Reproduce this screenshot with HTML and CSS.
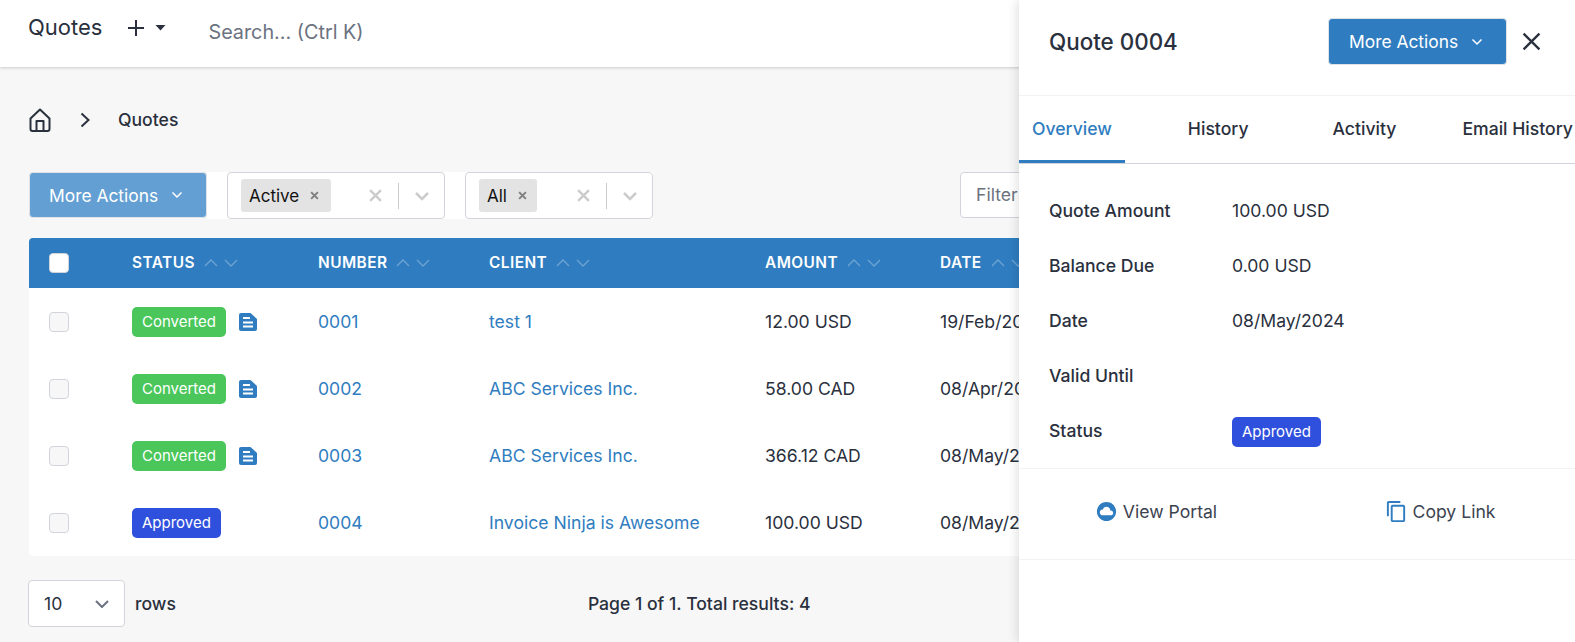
FILE: index.html
```html
<!DOCTYPE html>
<html lang="en">
<head>
<meta charset="utf-8">
<title>Quotes</title>
<link rel="stylesheet" href="styles.css">
</head>
<body>
<header class="topbar">
  <h1 class="page-title">Quotes</h1>
  <svg class="plus" viewBox="0 0 16 16"><path d="M8 0v16M0 8h16"/></svg>
  <svg class="caret" viewBox="0 0 10 6"><path d="M0 0h10L5 5.500z"/></svg>
  <span class="search">Search... (Ctrl K)</span>
</header>
<main class="main">
  <nav class="crumbs">
    <svg class="home" viewBox="0 0 22 24"><path d="M1.500 10.500 11 1.500l9.500 9v10.500a2 2 0 0 1-2 2h-15a2 2 0 0 1-2-2z"/><path d="M7.500 23v-10h7v10"/></svg>
    <svg class="crumb-chev" viewBox="0 0 10 16"><path d="m1.500 1.500 7 6.500-7 6.500"/></svg>
    <span class="crumb-text">Quotes</span>
  </nav>
  <div class="toolbar">
    <button class="btn btn-faded">More Actions<svg class="chev-sm" viewBox="0 0 12 8"><path d="m1.500 1.500 4.500 4.500 4.500-4.500"/></svg></button>
    <div class="filters">
      <div class="select select-status">
        <span class="tag">Active<svg class="tag-x" viewBox="0 0 8 8"><path d="m1 1 6 6M7 1 1 7"/></svg></span>
        <svg class="clear" viewBox="0 0 12 12"><path d="m1 1 10 10M11 1 1 11"/></svg><span class="divider"></span>
        <svg class="sel-chev" viewBox="0 0 16 10"><path d="m2 2 6 6 6-6"/></svg>
      </div>
      <div class="select select-range">
        <span class="tag">All<svg class="tag-x" viewBox="0 0 8 8"><path d="m1 1 6 6M7 1 1 7"/></svg></span>
        <svg class="clear" viewBox="0 0 12 12"><path d="m1 1 10 10M11 1 1 11"/></svg><span class="divider"></span>
        <svg class="sel-chev" viewBox="0 0 16 10"><path d="m2 2 6 6 6-6"/></svg>
      </div>
    </div>
    <div class="filter-input">Filter</div>
  </div>
  <table class="table">
    <colgroup><col class="c-check"><col class="c-status"><col class="c-number"><col class="c-client"><col class="c-amount"><col></colgroup>
    <thead>
      <tr>
        <th><span class="check check-head"></span></th>
        <th>STATUS<span class="sort"><svg viewBox="0 0 14 8"><path d="m1 7 6-6 6 6"/></svg><svg viewBox="0 0 14 8"><path d="m1 1 6 6 6-6"/></svg></span></th>
        <th>NUMBER<span class="sort"><svg viewBox="0 0 14 8"><path d="m1 7 6-6 6 6"/></svg><svg viewBox="0 0 14 8"><path d="m1 1 6 6 6-6"/></svg></span></th>
        <th>CLIENT<span class="sort"><svg viewBox="0 0 14 8"><path d="m1 7 6-6 6 6"/></svg><svg viewBox="0 0 14 8"><path d="m1 1 6 6 6-6"/></svg></span></th>
        <th>AMOUNT<span class="sort"><svg viewBox="0 0 14 8"><path d="m1 7 6-6 6 6"/></svg><svg viewBox="0 0 14 8"><path d="m1 1 6 6 6-6"/></svg></span></th>
        <th>DATE<span class="sort"><svg viewBox="0 0 14 8"><path d="m1 7 6-6 6 6"/></svg><svg viewBox="0 0 14 8"><path d="m1 1 6 6 6-6"/></svg></span></th>
      </tr>
    </thead>
    <tbody>
      <tr>
        <td><span class="check"></span></td>
        <td><div class="status-cell"><span class="badge badge-green">Converted</span><svg class="doc" viewBox="0 0 18 18"><path class="doc-bg" d="M2 0h9.500L18 6v10a2 2 0 0 1-2 2H2a2 2 0 0 1-2-2V2a2 2 0 0 1 2-2z"/><path class="doc-line" d="M4 5h7M4 9.500h10M4 13.500h10"/></svg></div></td>
        <td><a class="link">0001</a></td><td><a class="link">test 1</a></td><td>12.00 USD</td><td>19/Feb/2024</td>
      </tr>
      <tr>
        <td><span class="check"></span></td>
        <td><div class="status-cell"><span class="badge badge-green">Converted</span><svg class="doc" viewBox="0 0 18 18"><path class="doc-bg" d="M2 0h9.500L18 6v10a2 2 0 0 1-2 2H2a2 2 0 0 1-2-2V2a2 2 0 0 1 2-2z"/><path class="doc-line" d="M4 5h7M4 9.500h10M4 13.500h10"/></svg></div></td>
        <td><a class="link">0002</a></td><td><a class="link">ABC Services Inc.</a></td><td>58.00 CAD</td><td>08/Apr/2024</td>
      </tr>
      <tr>
        <td><span class="check"></span></td>
        <td><div class="status-cell"><span class="badge badge-green">Converted</span><svg class="doc" viewBox="0 0 18 18"><path class="doc-bg" d="M2 0h9.500L18 6v10a2 2 0 0 1-2 2H2a2 2 0 0 1-2-2V2a2 2 0 0 1 2-2z"/><path class="doc-line" d="M4 5h7M4 9.500h10M4 13.500h10"/></svg></div></td>
        <td><a class="link">0003</a></td><td><a class="link">ABC Services Inc.</a></td><td>366.12 CAD</td><td>08/May/2024</td>
      </tr>
      <tr>
        <td><span class="check"></span></td>
        <td><div class="status-cell"><span class="badge badge-blue">Approved</span></div></td>
        <td><a class="link">0004</a></td><td><a class="link">Invoice Ninja is Awesome</a></td><td>100.00 USD</td><td>08/May/2024</td>
      </tr>
    </tbody>
  </table>
  <div class="pager">
    <div class="rows-select">10<svg class="rows-chev" viewBox="0 0 14 8"><path d="m1 1 6 6 6-6"/></svg></div>
    <span class="rows-label">rows</span>
    <span class="page-info">Page 1 of 1. Total results: 4</span>
  </div>
</main>
<aside class="panel">
  <div class="panel-head">
    <h2 class="panel-title">Quote 0004</h2>
    <button class="btn btn-solid">More Actions<svg class="chev-sm" viewBox="0 0 12 8"><path d="m1.500 1.500 4.500 4.500 4.500-4.500"/></svg></button>
    <svg class="close" viewBox="0 0 18 18"><path d="m1.500 1.500 15 15M16.500 1.500l-15 15"/></svg>
  </div>
  <div class="tabs">
    <span class="tab tab-active">Overview</span>
    <span class="tab">History</span>
    <span class="tab">Activity</span>
    <span class="tab">Email History</span>
  </div>
  <dl class="details">
    <div class="detail"><dt>Quote Amount</dt><dd>100.00 USD</dd></div>
    <div class="detail"><dt>Balance Due</dt><dd>0.00 USD</dd></div>
    <div class="detail"><dt>Date</dt><dd>08/May/2024</dd></div>
    <div class="detail"><dt>Valid Until</dt><dd></dd></div>
    <div class="detail"><dt>Status</dt><dd class="detail-badge"><span class="badge badge-blue">Approved</span></dd></div>
  </dl>
  <div class="actions">
    <div class="action"><svg class="action-icon" viewBox="0 0 24 24"><path d="M12 2C6.470 2 2 6.470 2 12s4.470 10 10 10 10-4.470 10-10S17.530 2 12 2zm4.500 14H8c-1.660 0-3-1.340-3-3s1.340-3 3-3l.14.01C8.580 8.280 10.130 7 12 7c2.210 0 4 1.790 4 4h.5c1.380 0 2.500 1.120 2.500 2.500S17.880 16 16.500 16z"/></svg>View Portal</div>
    <div class="action"><svg class="action-icon" viewBox="0 0 24 24"><path d="M16 1H4c-1.100 0-2 .9-2 2v14h2V3h12V1zm3 4H8c-1.100 0-2 .9-2 2v14c0 1.100.9 2 2 2h11c1.100 0 2-.9 2-2V7c0-1.100-.9-2-2-2zm0 16H8V7h11v14z"/></svg>Copy Link</div>
  </div>
</aside>
</body>
</html>
```
FILE: styles.css
```css
* { box-sizing: border-box; }
html, body { margin: 0; height: 642px; overflow: hidden; }
body { background: #f7f7f7; font-family: Inter, "Liberation Sans", sans-serif; color: #2a303d; font-size: 17.6px; position: relative; }
svg { display: block; flex: none; }
path { fill: none; }

.topbar { height: 67px; background: #fff; box-shadow: 0 1px 3px rgba(0,0,0,.18); display: flex; align-items: center; padding-left: 28px; }
.page-title { margin: 0 0 13px; font-size: 22px; font-weight: 400; line-height: 28px; }
.plus { width: 16px; height: 16px; margin: 0 0 11px 26px; }
.plus path { stroke: #2a303d; stroke-width: 2; }
.caret { width: 11px; height: 6px; margin: 0 0 11px 11px; }
.caret path { fill: #2a303d; }
.search { margin-left: 42px; font-size: 19.800px; color: #6b7280; line-height: 24px; margin-bottom: 4px; }

.main { padding: 0 0 0 29px; }
.crumbs { display: flex; align-items: center; height: 24px; margin-top: 41px; }
.home { width: 22px; height: 24px; }
.home path { stroke: #2a303d; stroke-width: 2; stroke-linejoin: round; }
.crumb-chev { width: 10px; height: 16px; margin-left: 29px; }
.crumb-chev path { stroke: #2a303d; stroke-width: 2; }
.crumb-text { margin: 0 0 2px 28px; font-weight: 450; }

.toolbar { display: flex; margin-top: 40px; height: 47px; }
.btn { border: 1px solid #dfe3e8; color: #fff; font: 400 17.400px Inter, sans-serif; border-radius: 4px; display: flex; align-items: center; padding: 0 0 0 19px; cursor: pointer; }
.btn-faded { width: 178px; height: 46px; background: #639fd3; }
.btn-solid { width: 179px; height: 47px; background: #2f7dc0; flex: none; padding-left: 20px; }
.chev-sm { width: 12px; height: 8px; margin-left: 13px; }
.chev-sm path { stroke: #fff; stroke-width: 1.500; }
.filters { display: flex; gap: 20px; background: #fff; padding-left: 20px; }
.select { height: 47px; background: #fff; border: 1px solid #d1d5db; border-radius: 4px; display: flex; align-items: center; padding-left: 13px; }
.select-status { width: 218px; }
.select-range { width: 188px; }
.tag { height: 33px; background: #e3e3e3; border-radius: 3px; display: flex; align-items: center; padding-left: 8px; font-size: 17px; color: #111; }
.tag-x { width: 9px; height: 9px; margin-left: 11px; }
.tag-x path { stroke: #808080; stroke-width: 1.800; }
.select-status .tag { width: 90px; }
.select-range .tag { width: 58px; }
.clear { width: 13px; height: 13px; margin-left: auto; }
.clear path { stroke: #ccc; stroke-width: 2.200; }
.divider { width: 1px; height: 26px; background: #ccc; margin: 0 15px 0 16px; }
.sel-chev { width: 16px; height: 10px; margin-right: 14px; }
.sel-chev path { stroke: #ccc; stroke-width: 2.500; }
.filter-input { margin-left: 307px; width: 300px; height: 46px; background: #fff; border: 1px solid #d1d5db; border-radius: 4px; padding-left: 15px; line-height: 44px; color: #6b7280; }

.table { margin-top: 19px; width: 1518px; border-collapse: separate; border-spacing: 0; table-layout: fixed; background: #fff; border-radius: 4px; overflow: hidden; }
.c-check { width: 103px; }
.c-status { width: 186px; }
.c-number { width: 171px; }
.c-client { width: 276px; }
.c-amount { width: 175px; }
.table th { height: 50px; background: #2f7dc0; color: #fff; font-size: 15.400px; font-weight: 600; letter-spacing: .45px; text-align: left; padding: 0 0 2px; white-space: nowrap; }
.table td { height: 67px; padding: 0; white-space: nowrap; }
.table th:first-child { padding: 0 0 0 20px; }
.table td:first-child { padding-left: 20px; }
.check { display: block; width: 20px; height: 20px; border: 1px solid #d1d5db; border-radius: 4px; background: #f7f7f7; }
.check-head { background: #fff; }
.sort { display: inline-flex; gap: 6px; margin-left: 9px; vertical-align: 1px; }
.sort svg { width: 14px; height: 8px; }
.sort path { stroke: #fff; stroke-opacity: .3; stroke-width: 1.300; }
.status-cell { display: flex; align-items: center; gap: 13px; }
.badge { display: inline-block; height: 30px; line-height: 30px; padding: 0 10px; border-radius: 5px; color: #fff; font-size: 15px; font-weight: 400; }
.badge-green { background: #4ac65a; }
.badge-blue { background: #2f50dd; }
.doc { width: 18px; height: 18px; }
.doc-bg { fill: #2f7dc0; }
.doc-line { stroke: #fff; stroke-width: 2; }
.link { color: #2f7dc0; }

.pager { display: flex; align-items: center; margin-top: 24px; }
.rows-select { width: 97px; height: 47px; margin-left: -1px; background: #fff; border: 1px solid #d1d5db; border-radius: 4px; display: flex; align-items: center; padding-left: 15px; }
.rows-chev { width: 14px; height: 8px; margin-left: 33px; }
.rows-chev path { stroke: #6b7280; stroke-width: 2; }
.rows-label { margin-left: 10px; font-weight: 450; }
.page-info { margin-left: 412px; font-weight: 450; }

.panel { position: absolute; top: 0; left: 1019px; width: 556px; height: 642px; background: #fff; box-shadow: -2px 0 10px rgba(0,0,0,.12); }
.panel-head { height: 96px; display: flex; align-items: center; padding: 0 0 12px 30px; border-bottom: 1px solid #f3f3f3; }
.panel-title { margin: 0; font-size: 22.400px; font-weight: 450; width: 279px; }
.close { width: 19px; height: 19px; margin-left: 15px; }
.close path { stroke: #2a303d; stroke-width: 2.200; }
.tabs { height: 68px; display: flex; border-bottom: 1px solid #d1d5db; white-space: nowrap; overflow: hidden; gap: 50px; }
.tab { padding: 0 13px; font-weight: 450; line-height: 65px; height: 67px; }
.tab:nth-child(3) { margin-left: 8px; }
.tab:nth-child(4) { margin-left: -10px; }
.tab-active { color: #2f7dc0; border-bottom: 3px solid #2f7dc0; }
.details { margin: 0; padding-top: 19px; }
.detail { display: flex; align-items: center; height: 55px; }
.detail dt { width: 213px; padding-left: 30px; font-weight: 450; }
.detail dd { margin: 0; }
.detail .detail-badge { margin-top: 2px; }
.actions { margin-top: 10px; height: 92px; display: grid; grid-template-columns: 1fr 1fr; border-top: 1px solid #f3f3f3; border-bottom: 1px solid #f3f3f3; padding-bottom: 5px; }
.action { display: flex; align-items: center; justify-content: center; gap: 5px; color: #3c4250; }
.action:first-child { padding-right: 4px; }
.action:last-child { padding-left: 8px; }
.action-icon { width: 23px; height: 23px; }
.action-icon path { fill: #2f7dc0; }
```
